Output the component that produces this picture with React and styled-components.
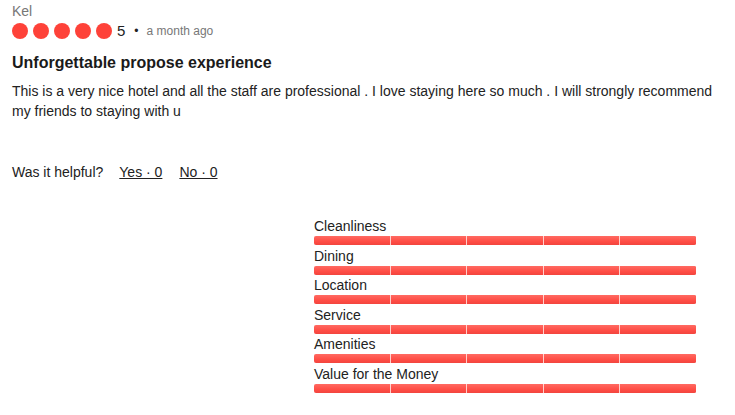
import React from 'react';
import styled, { createGlobalStyle } from 'styled-components';

const GlobalStyle = createGlobalStyle`
  body {
    margin: 0;
    background: #fff;
    font-family: "Liberation Sans", Arial, sans-serif;
    color: #222;
  }
`;

const Review = styled.div`
  padding: 3px 12px 0;
`;

const Author = styled.div`
  font-size: 14px;
  line-height: 16px;
  color: #777;
`;

const MetaRow = styled.div`
  display: flex;
  align-items: center;
  height: 17px;
  margin-top: 3px;
`;

const Dots = styled.div`
  display: flex;
  gap: 5px;
`;

const Dot = styled.span`
  width: 16px;
  height: 16px;
  border-radius: 50%;
  background: #fe4239;
`;

const Score = styled.span`
  font-size: 15px;
  color: #222;
  margin-left: 5px;
`;

const Bullet = styled.span`
  font-size: 12px;
  color: #222;
  margin: 0 8px 0 9px;
`;

const When = styled.span`
  font-size: 12px;
  color: #777;
`;

const Title = styled.h3`
  margin: 14px 0 0;
  font-size: 16px;
  line-height: 20px;
  font-weight: bold;
  color: #1a1a1a;
`;

const Body = styled.p`
  margin: 8px 0 0;
  font-size: 14px;
  line-height: 20px;
  color: #222;
`;

const Helpful = styled.div`
  display: flex;
  gap: 16px;
  margin-top: 43px;
  font-size: 14px;
  line-height: 16px;
`;

const Vote = styled.span`
  text-decoration: underline;
  cursor: pointer;
  margin-left: ${(p) => (p.$first ? '0' : '1px')};
`;

const Ratings = styled.div`
  width: 382px;
  margin: 38px 0 0 302px;
`;

const Item = styled.div`
  margin-bottom: 2.5px;
`;

const Label = styled.div`
  font-size: 14px;
  line-height: 16px;
  color: #222;
`;

const Bar = styled.div`
  display: flex;
  height: 9px;
  margin-top: 2px;
  border-radius: 2px;
  overflow: hidden;
  box-shadow: inset -1px 0 0 #e0403a;
`;

const Segment = styled.span`
  flex: 1;
  background: linear-gradient(#ff6a62, #ff4d45 60%, #f2453e);
  border-left: ${(p) => (p.$first ? 'none' : '1px solid rgba(255, 230, 228, 0.85)')};
`;

const categories = [
  'Cleanliness',
  'Dining',
  'Location',
  'Service',
  'Amenities',
  'Value for the Money',
];

export default function App() {
  return (
    <>
      <GlobalStyle />
      <Review>
        <Author>Kel</Author>
        <MetaRow>
          <Dots>
            {[0, 1, 2, 3, 4].map((i) => (
              <Dot key={i} />
            ))}
          </Dots>
          <Score>5</Score>
          <Bullet>•</Bullet>
          <When>a month ago</When>
        </MetaRow>
        <Title>Unforgettable propose experience</Title>
        <Body>
          This is a very nice hotel and all the staff are professional . I love staying here so much . I will strongly recommend my friends to staying with u
        </Body>
        <Helpful>
          <span>Was it helpful?</span>
          <Vote $first>Yes · 0</Vote>
          <Vote>No · 0</Vote>
        </Helpful>
        <Ratings>
          {categories.map((c) => (
            <Item key={c}>
              <Label>{c}</Label>
              <Bar>
                {[0, 1, 2, 3, 4].map((i) => (
                  <Segment key={i} $first={i === 0} />
                ))}
              </Bar>
            </Item>
          ))}
        </Ratings>
      </Review>
    </>
  );
}
